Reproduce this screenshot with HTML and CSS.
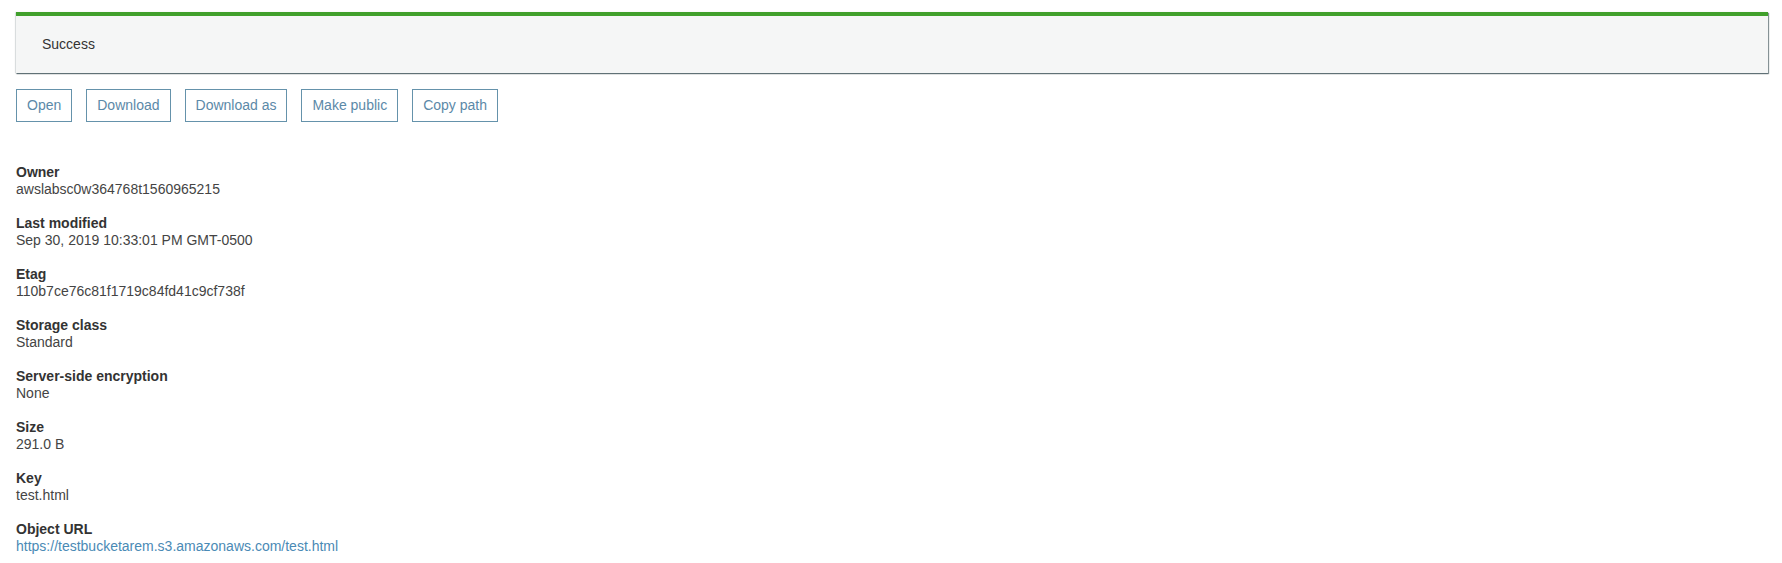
FILE: index.html
```html
<!DOCTYPE html>
<html lang="en">
<head>
<meta charset="utf-8">
<title>Object overview</title>
<link rel="stylesheet" href="styles.css">
</head>
<body>
<div class="page">
  <div class="alert alert-success">Success</div>
  <div class="actions">
    <button class="btn">Open</button>
    <button class="btn">Download</button>
    <button class="btn">Download as</button>
    <button class="btn">Make public</button>
    <button class="btn">Copy path</button>
  </div>
  <dl class="details">
    <div class="item"><dt>Owner</dt><dd>awslabsc0w364768t1560965215</dd></div>
    <div class="item"><dt>Last modified</dt><dd>Sep 30, 2019 10:33:01 PM GMT-0500</dd></div>
    <div class="item"><dt>Etag</dt><dd>110b7ce76c81f1719c84fd41c9cf738f</dd></div>
    <div class="item"><dt>Storage class</dt><dd>Standard</dd></div>
    <div class="item"><dt>Server-side encryption</dt><dd>None</dd></div>
    <div class="item"><dt>Size</dt><dd>291.0 B</dd></div>
    <div class="item"><dt>Key</dt><dd>test.html</dd></div>
    <div class="item"><dt>Object URL</dt><dd><a class="link" href="#">https://testbucketarem.s3.amazonaws.com/test.html</a></dd></div>
  </dl>
</div>
</body>
</html>
```

FILE: styles.css
```css
html, body {
  margin: 0;
  padding: 0;
  background: #ffffff;
}

body {
  font-family: "Liberation Sans", Arial, sans-serif;
  font-size: 14px;
  color: #444444;
}

.page {
  padding: 12px 14px 0 16px;
}

.alert {
  background: #f5f6f6;
  border-top: 4px solid #41a02c;
  padding: 20px 26px;
  line-height: 17px;
  color: #333333;
  box-shadow: 1px 1px 1px 0 rgba(0, 28, 36, 0.45), 0 1px 1px 0 rgba(0, 28, 36, 0.3), -1px 0 1px 0 rgba(0, 28, 36, 0.1);
}

.actions {
  display: flex;
  gap: 14px;
  margin-top: 16px;
}

.btn {
  font-family: "Liberation Sans", Arial, sans-serif;
  font-size: 14px;
  line-height: 21px;
  padding: 5px 10px;
  margin: 0;
  background: #ffffff;
  color: #5b89a8;
  border: 1px solid #6592ab;
  border-radius: 0;
}

.details {
  margin: 41px 0 0 0;
  padding: 0;
}

.item {
  margin-bottom: 16px;
}

.item dt {
  font-weight: bold;
  color: #333333;
  line-height: 18px;
}

.item dd {
  margin: 0;
  line-height: 17px;
  color: #444444;
}

.link {
  color: #4a8ab5;
  text-decoration: none;
}
```
